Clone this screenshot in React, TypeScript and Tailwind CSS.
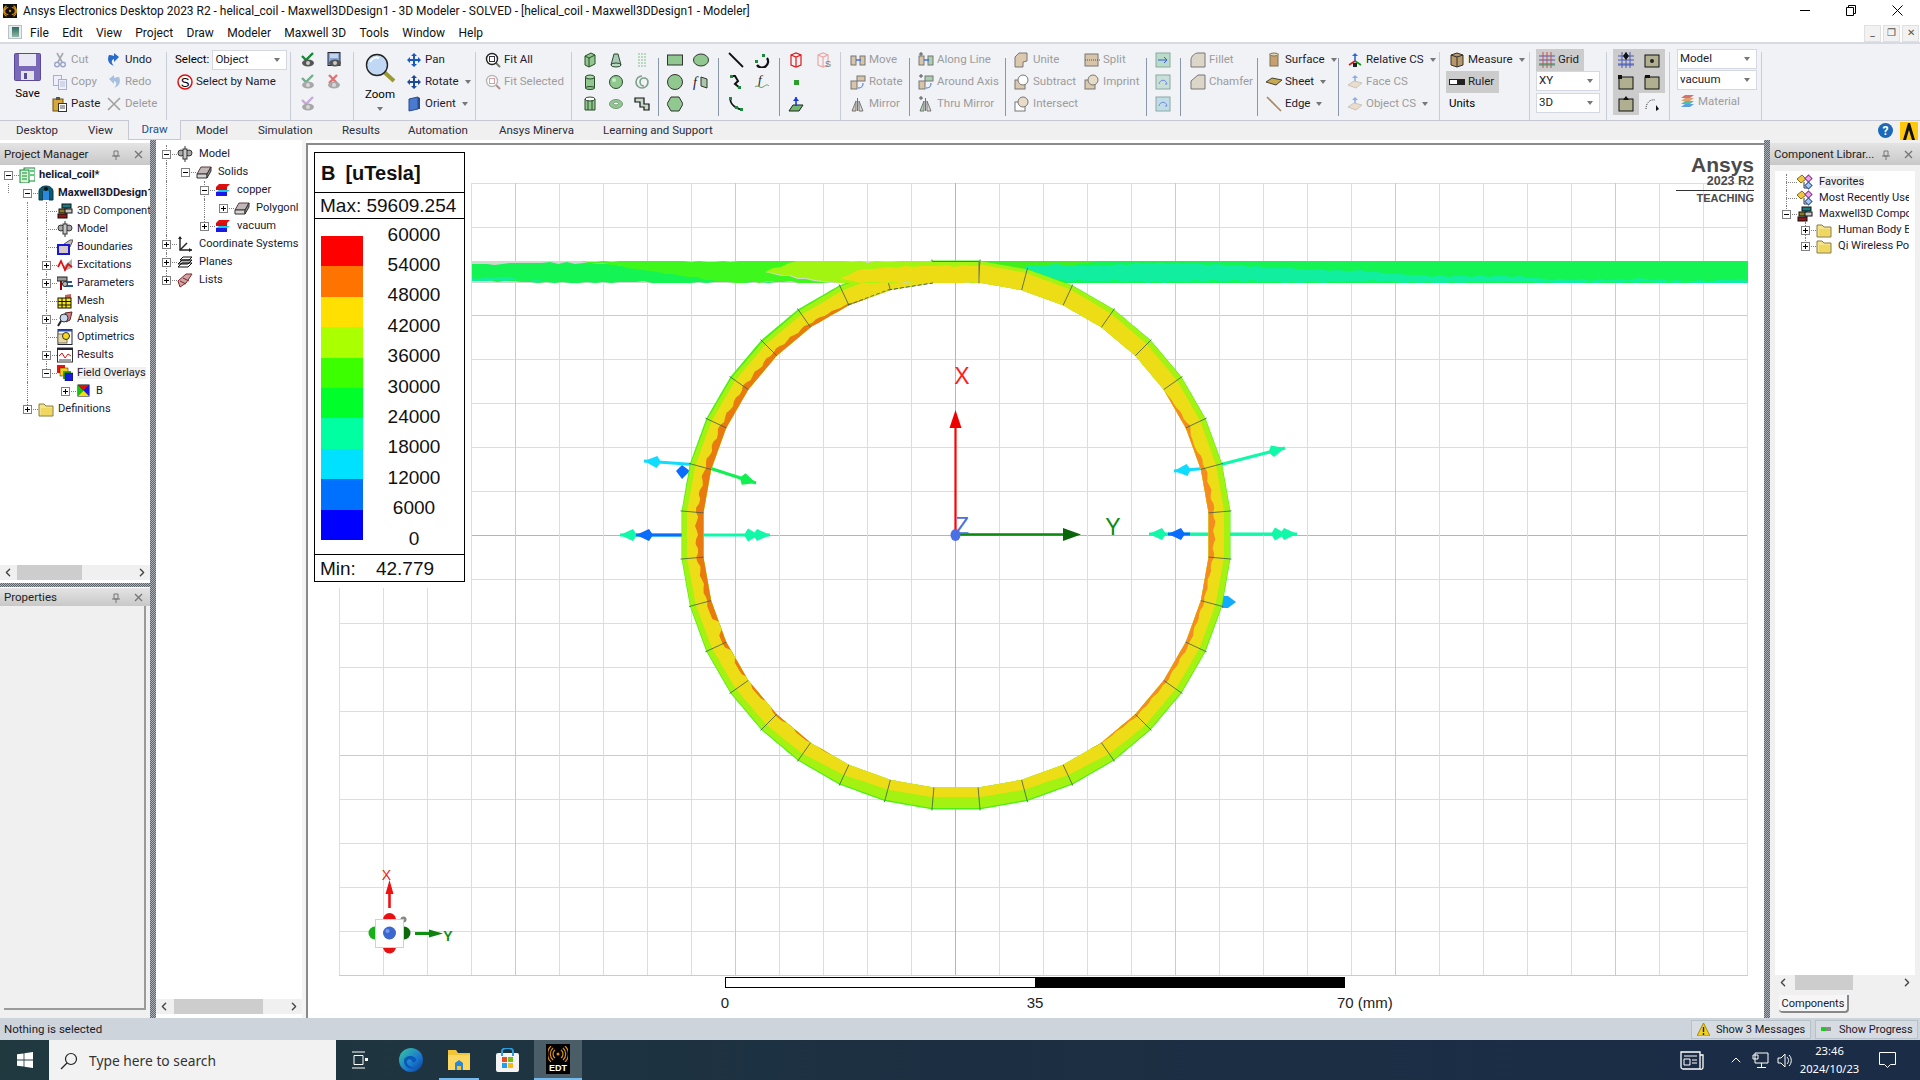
import type { ReactNode } from "react"
import { ChevronLeft, ChevronRight, ChevronUp } from "lucide-react"

// ---------- small helpers ----------

function Svg({ w = 16, h = 16, children }: { w?: number; h?: number; children: ReactNode }) {
  return (
    <svg width={w} height={h} viewBox={`0 0 ${w} ${h}`} className="shrink-0">
      {children}
    </svg>
  )
}

const Caret = () => <span className="ml-[3px] inline-block h-0 w-0 border-x-[3px] border-t-[4px] border-x-transparent border-t-[#777]" />

function Item({ icon, label, off, arrow, className = "" }: { icon?: ReactNode; label?: string; off?: boolean; arrow?: boolean; className?: string }) {
  return (
    <div className={`flex h-[22px] items-center gap-[3px] whitespace-nowrap ${className}`}>
      {icon !== undefined && <span className="flex h-[16px] w-[16px] shrink-0 items-center justify-center">{icon}</span>}
      {label && <span className={off ? "text-[#9c9c9c]" : "text-[#1c1c2c]"}>{label}</span>}
      {arrow && <Caret />}
    </div>
  )
}

function Sep({ dark }: { dark?: boolean }) {
  return dark ? <div className="mt-[9px] h-[58px] w-px shrink-0 bg-[#8a97a8]" /> : <div className="mt-[3px] h-[70px] w-px shrink-0 bg-[#c8ccd6]" />
}

function Combo({ value, className = "" }: { value: string; className?: string }) {
  return (
    <div className={`flex items-center justify-between border border-[#d4d8e0] bg-white pl-[2px] pr-[6px] text-[#1c1c2c] ${className}`}>
      <span>{value}</span>
      <span className="inline-block h-0 w-0 border-x-[3px] border-t-[4px] border-x-transparent border-t-[#777]" />
    </div>
  )
}

// ---------- ribbon icons ----------

const Floppy = () => (
  <svg width="27" height="28" viewBox="0 0 27 28">
    <rect x="0.5" y="0.5" width="26" height="27" rx="1" fill="#7a68b8" stroke="#5a4a98" />
    <rect x="5" y="1" width="17" height="12" fill="#e8e8f4" />
    <rect x="7" y="18" width="13" height="9" fill="#e4e4e4" />
    <rect x="10" y="20" width="3" height="6" fill="#5a4a98" />
  </svg>
)
const Scissors = () => (
  <Svg>
    <path d="M5 1l5 9M11 1L6 10" stroke="#a8a8b0" strokeWidth="1.6" fill="none" />
    <circle cx="5" cy="12.5" r="2.3" fill="none" stroke="#9aa4c8" strokeWidth="1.4" />
    <circle cx="11" cy="12.5" r="2.3" fill="none" stroke="#9aa4c8" strokeWidth="1.4" />
  </Svg>
)
const CopyIco = () => (
  <Svg>
    <rect x="1.5" y="1.5" width="8" height="10" fill="#eef" stroke="#a8b0c8" />
    <rect x="6.5" y="5.5" width="8" height="10" fill="#eef" stroke="#a8b0c8" />
    <path d="M8 8h5M8 10h5M8 12h5" stroke="#b8c0d0" />
  </Svg>
)
const PasteIco = () => (
  <Svg>
    <rect x="1" y="3" width="10" height="12" fill="#d8a838" stroke="#6a5010" />
    <rect x="4" y="1" width="4" height="3" fill="#555" />
    <rect x="6.5" y="7.5" width="8" height="8" fill="#fff" stroke="#333" />
    <path d="M8 10h5M8 12h5" stroke="#555" />
  </Svg>
)
const UndoIco = ({ off }: { off?: boolean }) => (
  <Svg>
    <path d={off ? "M13 3c2 4 1 9-5 11 3-3 3-6 0-7v3L3 5l5-4v3c2-1 4-1 5-1z" : "M3 3c-2 4-1 9 5 11-3-3-3-6 0-7v3l5-5L8 1v3C6 3 4 3 3 3z"} fill={off ? "#a8c0e0" : "#2a6ac8"} />
  </Svg>
)
const XIco = () => (
  <Svg>
    <path d="M2 2l12 12M14 2L2 14" stroke="#a0a0a0" strokeWidth="1.6" />
  </Svg>
)
const SelectName = () => (
  <Svg>
    <circle cx="8" cy="8" r="7" fill="#fff" stroke="#e01010" strokeWidth="1.5" />
    <text x="8" y="12.5" textAnchor="middle" className="font-['Liberation_Sans'] text-[13px]" fill="#000">S</text>
  </Svg>
)
const EyeCheck = ({ c, faded }: { c: string; faded?: boolean }) => (
  <Svg>
    <path d="M2 4l4 4 7-7" stroke={c} strokeWidth="2.4" fill="none" />
    <ellipse cx="8" cy="11" rx="6" ry="3.5" fill={faded ? "#a8a8a8" : "#555"} />
    <circle cx="8" cy="11" r="2" fill={faded ? "#d8d8d8" : "#ccc"} />
  </Svg>
)
const EyeList = () => (
  <Svg>
    <rect x="2" y="0.5" width="12" height="13" fill="#88a8d8" stroke="#223" />
    <path d="M4 3h8M4 5h8" stroke="#fff" />
    <ellipse cx="9" cy="11" rx="6" ry="3.5" fill="#555" />
    <circle cx="9" cy="11" r="2" fill="#ccc" />
  </Svg>
)
const EyeX = () => (
  <Svg>
    <path d="M3 1l8 8M11 1L3 9" stroke="#e07070" strokeWidth="2.2" />
    <ellipse cx="8" cy="11" rx="6" ry="3.5" fill="#a8a8a8" />
    <circle cx="8" cy="11" r="2" fill="#d8d8d8" />
  </Svg>
)
const Magnifier = () => (
  <svg width="31" height="30" viewBox="0 0 31 30">
    <path d="M18 18l11 10" stroke="#9a9a30" strokeWidth="4" />
    <circle cx="12" cy="12" r="10.5" fill="#c0d8f4" stroke="#222" strokeWidth="1.4" />
    <path d="M5 9c2-4 6-5 9-4" stroke="#fff" strokeWidth="2" fill="none" />
  </svg>
)
const Fourway = ({ rot }: { rot?: boolean }) => (
  <Svg>
    <path d="M8 1l3 3H9v3h3V5l3 3-3 3V9H9v3h2l-3 3-3-3h2V9H4v2L1 8l3-3v2h3V4H5z" fill={rot ? "#1a4a98" : "#1a5ac0"} />
  </Svg>
)
const OrientCube = () => (
  <Svg>
    <path d="M3 3l9-2v12l-9 2z" fill="#4a7ad0" stroke="#2a4a90" />
    <path d="M12 1l2 1v11l-2 0z" fill="#2a4a90" />
  </Svg>
)
const FitIco = ({ off }: { off?: boolean }) => (
  <Svg>
    <path d="M10 10l5 5" stroke={off ? "#b09090" : "#776"} strokeWidth="2" />
    <circle cx="7" cy="7" r="5.5" fill="#fff" stroke={off ? "#b8b8b8" : "#222"} strokeWidth="1.4" />
    <rect x="4.5" y="4.5" width="5" height="5" fill="none" stroke={off ? "#d8a0a0" : "#334"} />
  </Svg>
)

const G = "#90c890"
const GD = "#2a4a2a"
const Cyl = () => (
  <Svg>
    <rect x="3.5" y="3" width="9" height="11" fill={G} stroke={GD} />
    <ellipse cx="8" cy="3" rx="4.5" ry="2" fill="#a8dca8" stroke={GD} />
    <ellipse cx="8" cy="14" rx="4.5" ry="1.5" fill={G} stroke={GD} />
  </Svg>
)
const BoxG = () => (
  <Svg>
    <path d="M3 4l6-3 4 2v9l-6 3-4-2z" fill={G} stroke={GD} />
    <path d="M3 4l4 2 6-3M7 6v9" stroke={GD} fill="none" />
  </Svg>
)
const Cone = () => (
  <Svg>
    <path d="M6 2h4l3 11H3z" fill="#a8c8b8" stroke={GD} />
    <ellipse cx="8" cy="13" rx="5" ry="2" fill="#b8d8c8" stroke={GD} />
  </Svg>
)
const Sphere = () => (
  <Svg>
    <circle cx="8" cy="8" r="6.5" fill={G} stroke={GD} />
    <circle cx="6" cy="6" r="2" fill="#c8ecc8" />
  </Svg>
)
const Prism = () => (
  <Svg>
    <path d="M3 3h10v11H3z" fill={G} stroke={GD} />
    <ellipse cx="8" cy="3" rx="5" ry="2" fill="#fff" stroke={GD} />
    <path d="M6 4v10M10 4v10" stroke={GD} />
  </Svg>
)
const Torus = () => (
  <Svg>
    <ellipse cx="8" cy="8" rx="6.5" ry="4.5" fill={G} stroke="#7a9a7a" />
    <ellipse cx="8" cy="7.5" rx="2.5" ry="1.5" fill="#fff" stroke="#7a9a7a" />
  </Svg>
)
const Helix = () => (
  <Svg>
    <path d="M4 2h8M4 5h8M4 8h8M4 11h8M4 14h8" stroke="#a8d0b0" strokeWidth="1.6" strokeDasharray="2 1" />
  </Svg>
)
const Spiral = () => (
  <Svg>
    <path d="M8 2a6 6 0 1 0 6 6 4 4 0 1 0-4 4" fill="none" stroke="#7aa088" strokeWidth="1.6" />
  </Svg>
)
const Bond = () => (
  <Svg>
    <path d="M1 2h9v6h5v6h-5v-3H6V6H1z" fill="#c8d8c8" stroke="#111" strokeWidth="1.2" />
  </Svg>
)
const RectG = () => (
  <Svg>
    <rect x="0.5" y="3" width="15" height="10" fill={G} stroke="#333" />
  </Svg>
)
const OvalG = () => (
  <Svg>
    <ellipse cx="8" cy="8" rx="7.5" ry="6" fill={G} stroke="#333" />
  </Svg>
)
const CircleG = () => (
  <Svg>
    <circle cx="8" cy="8" r="7.5" fill={G} stroke="#333" />
  </Svg>
)
const FnIco = () => (
  <Svg>
    <text x="0" y="13" className="font-['Liberation_Serif'] text-[14px] italic" fill="#222">f</text>
    <path d="M8 3l6 2v9l-6-2z" fill="#a8c8a8" stroke="#333" />
  </Svg>
)
const Hexa = () => (
  <Svg>
    <path d="M4 1h8l4 7-4 7H4L0 8z" fill={G} stroke="#333" />
  </Svg>
)
const LineIco = () => (
  <Svg>
    <path d="M1 1l14 14" stroke="#111" strokeWidth="1.8" />
  </Svg>
)
const ArcIco = () => (
  <Svg>
    <path d="M13 6a6 6 0 0 1-10 7" stroke="#111" strokeWidth="2.2" fill="none" />
    <rect x="1" y="8" width="3" height="3" fill="#1a8a3a" />
    <rect x="8" y="2" width="3" height="3" fill="#1a8a3a" />
  </Svg>
)
const ZigIco = () => (
  <Svg>
    <path d="M3 2h4l3 5-3 3 5 4" stroke="#111" strokeWidth="2" fill="none" />
    <rect x="2" y="1" width="3" height="3" fill="#1a8a3a" />
    <rect x="10" y="12" width="3" height="3" fill="#1a8a3a" />
  </Svg>
)
const FnWave = () => (
  <Svg>
    <text x="4" y="10" className="font-['Liberation_Serif'] text-[13px] italic" fill="#222">f</text>
    <path d="M1 13c3-3 5 2 8 0s4-3 6-1" stroke="#6a9a6a" fill="none" />
  </Svg>
)
const CurveIco = () => (
  <Svg>
    <path d="M2 1c0 8 5 11 12 13" stroke="#111" strokeWidth="1.8" fill="none" />
    <rect x="1" y="1" width="3" height="3" fill="#1a8a3a" />
    <rect x="7" y="10" width="3" height="3" fill="#1a8a3a" />
    <rect x="12" y="12" width="3" height="3" fill="#1a8a3a" />
  </Svg>
)
const RedBox = ({ s }: { s?: boolean }) => (
  <Svg>
    <g stroke={s ? "#e8a8a8" : "#e01818"} fill="none" strokeWidth="1.2">
      <path d="M3 3l5-2 5 2v10l-5 2-5-2z" />
      <path d="M3 3l5 2 5-2M8 5v10" />
    </g>
    {s && <text x="10" y="15" className="font-['Liberation_Sans'] text-[9px]" fill="#777">S</text>}
  </Svg>
)
const Dot = () => <div className="h-[5px] w-[5px] bg-[#2aa02a]" />
const PlaneIco = () => (
  <Svg>
    <path d="M1 15l4-6h10l-4 6z" fill="#70b870" stroke="#222" />
    <path d="M8 1v9" stroke="#1a3ae0" strokeWidth="1.6" />
    <path d="M5 5l3-4 3 4z" fill="#1a3ae0" />
  </Svg>
)
const MoveIco = ({ kind }: { kind: "m" | "r" | "f" | "lm" | "lr" | "lf" }) => {
  const plus = kind[0] === "l"
  const k = kind[kind.length - 1]
  const c = plus ? "#a8d0b0" : "#d8c4a8"
  return (
    <Svg>
      {plus && <path d="M1 2h4M3 0v4" stroke="#555" />}
      {k === "f" ? (
        <>
          <path d="M2 15l4-10v10z" fill={c} stroke="#777" />
          <path d="M9 15V5l4 10z" fill="#d8d8d0" stroke="#777" />
          <path d="M7.5 2v13" stroke="#5a6ad8" />
        </>
      ) : k === "r" ? (
        <>
          <rect x="1" y="7" width="6" height="8" fill="#d8c4a8" stroke="#777" />
          <rect x="7" y="2" width="8" height="5" fill={c} stroke="#777" />
          <path d="M8 14c4 0 5-2 5-5" stroke="#3a6ae0" fill="none" />
        </>
      ) : (
        <>
          <rect x="1" y="4" width="5" height="9" fill="#d8c4a8" stroke="#777" />
          <rect x="10" y="4" width="5" height="9" fill={c} stroke="#777" />
          <path d="M6 8h5" stroke="#3a6ae0" strokeWidth="1.4" />
        </>
      )}
    </Svg>
  )
}
const BoolIco = ({ kind }: { kind: "u" | "s" | "i" | "sp" | "im" }) => (
  <Svg>
    {kind === "sp" ? (
      <>
        <rect x="1" y="2" width="13" height="12" fill="#d8c4a8" stroke="#777" />
        <path d="M1 8h15" stroke="#555" strokeDasharray="1 1" />
      </>
    ) : kind === "u" ? (
      <path d="M1 5l4-4h8v8l-4 1v5H1z" fill="#dcc8ac" stroke="#777" />
    ) : (
      <>
        <rect x="1" y="6" width="10" height="9" fill={kind === "i" ? "#fff" : "#dcc8ac"} stroke="#777" />
        <circle cx="9" cy="6" r="5" fill={kind === "s" ? "#fff" : "#e8dcc8"} stroke="#777" />
      </>
    )}
  </Svg>
)
const SheetIco = ({ kind }: { kind: number }) => (
  <Svg>
    <rect x="1" y="1" width="14" height="14" fill={kind === 0 ? "#b8dcc8" : kind === 1 ? "#c8e0d8" : "#c0dce8"} stroke="#8aa8a0" />
    <path d={kind === 0 ? "M3 8h9M9 5l3 3-3 3" : "M4 10c1-5 7-5 8 0M10 10l2 0"} stroke={kind === 0 ? "#3a5ae0" : "#6a8ae0"} fill="none" />
  </Svg>
)
const FilletIco = ({ c }: { c?: boolean }) => (
  <Svg>
    <path d={c ? "M1 15V7l7-6h7v14z" : "M1 15V8c0-4 4-7 7-7h7v14z"} fill="#dcd6c8" stroke="#777" />
  </Svg>
)
const SurfIco = () => (
  <Svg>
    <rect x="4" y="2" width="8" height="12" fill="#c8a070" stroke="#775" />
    <ellipse cx="8" cy="2.5" rx="4" ry="1.5" fill="#e8d8c0" stroke="#775" />
  </Svg>
)
const SheetSm = () => (
  <Svg>
    <path d="M0 8l6-4 10 2-6 5z" fill="#c8a850" stroke="#443" />
  </Svg>
)
const EdgeIco = () => (
  <Svg>
    <path d="M1 1l14 14" stroke="#a88a60" strokeWidth="1.6" />
  </Svg>
)
const CsIco = ({ off, kind }: { off?: boolean; kind: number }) => (
  <Svg>
    <g opacity={off ? 0.5 : 1}>
      <path d="M8 9V2" stroke="#2a6ad8" strokeWidth="1.6" />
      <path d="M5 4l3-3 3 3z" fill="#2a6ad8" />
      {kind === 0 ? (
        <>
          <path d="M8 9l-6 4" stroke="#d01818" strokeWidth="1.6" />
          <path d="M8 9l6 4" stroke="#109010" strokeWidth="1.6" />
          <rect x="6" y="11" width="4" height="4" fill="#222" />
        </>
      ) : (
        <path d="M1 11l6-4 8 2-6 5z" fill="#e8c8a0" stroke="#998" />
      )}
    </g>
  </Svg>
)
const MeasureIco = () => (
  <Svg>
    <path d="M2 3l6-2 6 2v10l-6 2-6-2z" fill="#b89868" stroke="#333" />
    <path d="M8 5v10M2 3l6 2 6-2" stroke="#333" fill="none" />
  </Svg>
)
const RulerIco = () => (
  <div className="h-[6px] w-[16px] border border-[#222] bg-linear-to-r from-white from-50% to-[#222] to-50%" />
)
const GridIco = ({ dotted }: { dotted?: boolean }) => (
  <Svg>
    <path d="M0 4h16M0 8h16M0 12h16" stroke="#4858b8" />
    <path d="M4 0v16M8 0v16M12 0v16" stroke={dotted ? "#4858b8" : "#c05050"} />
    <path d="M0 13h16" stroke={dotted ? "#4858b8" : "#40a040"} />
    {dotted && <path d="M8 0l3 4-3 4-3-4z" fill="#111" />}
  </Svg>
)
const SnapBox = ({ kind }: { kind: number }) => (
  <Svg>
    <rect x="1" y="3" width="14" height="12" fill="#b0b090" stroke="#111" />
    {kind === 0 && <circle cx="8" cy="9" r="2" fill="#222" />}
    {kind === 1 && <rect x="0" y="1" width="4" height="4" fill="#111" />}
    {kind === 2 && <path d="M1 1h5v3H1z" fill="#111" />}
    {kind === 3 && <path d="M8 0l3 4H5z" fill="#111" />}
  </Svg>
)
const ArcSnap = () => (
  <Svg>
    <path d="M2 13c0-6 4-10 9-9" stroke="#333" strokeDasharray="1 1" fill="none" />
    <path d="M12 9l3 4-3 2z" fill="#111" />
  </Svg>
)
const MaterialIco = () => (
  <Svg>
    <path d="M2 13l4-3h9l-4 3z" fill="#5aa0e0" />
    <path d="M2 10l4-3h9l-4 3z" fill="#50c0a0" />
    <path d="M2 7l4-3h9l-4 3z" fill="#e0a070" />
    <path d="M2 4l4-3h9l-4 3z" fill="#d87070" />
  </Svg>
)

// ---------- tree icons ----------

const ProjectIco = () => (
  <Svg>
    <rect x="5" y="1" width="11" height="13" fill="#fff" stroke="#108a30" />
    <rect x="1" y="3" width="9" height="13" fill="#d8f4d8" stroke="#108a30" />
    <path d="M3 6h5M3 9h5M3 12h5" stroke="#108a30" />
    <path d="M12 3v2M14 3v2M12 7v2M14 7v2" stroke="#18c048" strokeWidth="1.4" />
  </Svg>
)
const MaxwellIco = () => (
  <Svg>
    <path d="M1 15V6a7 5 0 0 1 14 0v9h-4V7a3 2 0 0 0-6 0v8z" fill="#0a5a70" stroke="#08384a" />
    <path d="M5 15V7a3 2 0 0 1 6 0v8z" fill="#2a88e0" />
    <circle cx="8" cy="4" r="2" fill="#111" />
  </Svg>
)
const StackIco = () => (
  <Svg>
    <rect x="5" y="1" width="9" height="4" fill="#1a7a80" stroke="#111" />
    <rect x="2" y="6" width="8" height="4" fill="#8a7a20" stroke="#111" />
    <rect x="8" y="6" width="7" height="4" fill="#c8c8c8" stroke="#111" />
    <rect x="1" y="11" width="9" height="4" fill="#901818" stroke="#111" />
  </Svg>
)
const ModelIco = () => (
  <Svg>
    <circle cx="4" cy="7" r="3" fill="#a8a8a8" stroke="#333" />
    <circle cx="12" cy="7" r="3" fill="#a8a8a8" stroke="#333" />
    <rect x="6" y="3" width="4" height="10" fill="#c8c8c8" stroke="#333" />
    <path d="M8 0v3M8 13v3" stroke="#333" />
  </Svg>
)
const BoundIco = () => (
  <Svg>
    <path d="M7 5l6-4h3l-3 7H7z" fill="#c8b8b8" stroke="#555" />
    <rect x="1" y="6" width="11" height="9" fill="#d8c8c8" stroke="#1818d8" strokeWidth="2" />
  </Svg>
)
const ExciteIco = () => (
  <Svg>
    <path d="M7 9l8-7v9l-8 3z" fill="#b0b0b0" />
    <path d="M1 10l3-6 4 9 3-6 4 3" stroke="#e01010" strokeWidth="1.8" fill="none" />
  </Svg>
)
const ParamIco = () => (
  <Svg>
    <rect x="0" y="2" width="10" height="4" fill="#9a9a9a" stroke="#222" />
    <path d="M4 6v9" stroke="#900" strokeWidth="2" />
    <path d="M8 7h7M9 11h7" stroke="#205a8a" strokeWidth="2" />
    <circle cx="8" cy="9" r="2.5" fill="#bbb" stroke="#222" />
  </Svg>
)
const MeshIco = () => (
  <Svg>
    <path d="M8 2l6-1v4H8z" fill="#c86060" />
    <rect x="1" y="5" width="13" height="10" fill="#f8e818" stroke="#111" />
    <path d="M1 8.5h13M1 12h13M5 5v10M9 5v10" stroke="#111" />
  </Svg>
)
const AnalysisIco = () => (
  <Svg>
    <path d="M8 2l7-1-2 8-4 2z" fill="#c88080" stroke="#622" />
    <circle cx="7" cy="7" r="4" fill="#c8d8f0" stroke="#333" />
    <path d="M4 10l-3 5" stroke="#222" strokeWidth="2" />
  </Svg>
)
const OptIco = () => (
  <Svg>
    <rect x="1" y="0.5" width="14" height="15" fill="#fff" stroke="#223" />
    <rect x="1" y="0.5" width="14" height="2" fill="#2a4aa8" />
    <rect x="1" y="5" width="9" height="9" fill="#e8d8a0" stroke="#776" />
    <circle cx="9" cy="7" r="3.5" fill="#f8d818" stroke="#333" />
  </Svg>
)
const ResultIco = () => (
  <Svg>
    <rect x="0.5" y="1" width="15" height="14" fill="#fff" stroke="#333" />
    <rect x="0.5" y="1" width="15" height="2" fill="#223" />
    <path d="M2 9l3-3 3 5 3-4 3 2" stroke="#e01010" fill="none" />
    <path d="M2 13h12" stroke="#444" />
  </Svg>
)
const OverlayIco = () => (
  <Svg>
    <rect x="0" y="0" width="8" height="8" fill="#f01010" />
    <rect x="3" y="3" width="8" height="8" fill="#f8d010" stroke="#222" strokeWidth="0.5" />
    <rect x="6" y="6" width="8" height="8" fill="#18b018" />
    <rect x="8" y="8" width="8" height="8" fill="#1818e0" stroke="#111" strokeWidth="0.5" />
  </Svg>
)
const BFlag = () => (
  <Svg>
    <rect x="1.5" y="1.5" width="12" height="12" fill="#111" />
    <path d="M2 2l5.500 5.500L2 13z" fill="#18c018" />
    <path d="M13 2L7.500 7.500 13 13z" fill="#1818e8" />
    <path d="M2 2h11L7.500 7.500z" fill="#e01010" />
    <path d="M2 13h11L7.500 7.500z" fill="#f0e010" />
  </Svg>
)
const FolderIco = () => (
  <Svg>
    <path d="M1 3h5l2 2h7v10H1z" fill="#f4e48c" stroke="#8a7a3a" />
    <path d="M3 7h11v7H3z" fill="#f0d860" />
  </Svg>
)
const SolidIco = () => (
  <Svg>
    <path d="M1 10l4-7h10l-4 7z" fill="#c0b8b8" stroke="#5a3a3a" />
    <path d="M1 10h10v4H1z" fill="#d8d4d4" stroke="#333" />
    <path d="M11 10l4-7v4l-4 7z" fill="#8a8a8a" stroke="#333" />
  </Svg>
)
const MatIco = () => (
  <Svg>
    <path d="M1 5l3-3h11l-3 3z" fill="#e01010" />
    <rect x="1" y="5" width="11" height="3" fill="#d01010" />
    <path d="M1 10l3-2h11l-3 2z" fill="#18c8e8" />
    <rect x="1" y="10" width="11" height="4" fill="#1818e8" />
  </Svg>
)
const CsTree = () => (
  <Svg>
    <path d="M3 1v13h12" stroke="#222" strokeWidth="1.4" fill="none" />
    <path d="M3 14l7-7" stroke="#222" strokeWidth="1.4" />
    <path d="M1 3l2-3 2 3zM12 12l3 2-3 2z" fill="#222" />
  </Svg>
)
const PlanesIco = () => (
  <Svg>
    <path d="M1 10l4-4h10l-4 4z" fill="#b8b8b8" stroke="#111" />
    <path d="M1 13l4-4h10l-4 4zM3 6l3-3h9l-3 3z" fill="none" stroke="#111" />
  </Svg>
)
const ListsIco = () => (
  <Svg>
    <path d="M1 9l8-7h6l-6 9-6 4z" fill="#c8a8a8" stroke="#822" />
    <path d="M3 9l6 3M6 6l6 3" stroke="#822" />
  </Svg>
)
const FavIco = () => (
  <Svg>
    <path d="M0 5l5-4 4 4-5 4z" fill="#f0c840" stroke="#8a6a10" />
    <rect x="9" y="2" width="5" height="5" transform="rotate(45 11.5 4.5)" fill="#e8a8e8" stroke="#8a3a8a" />
    <rect x="9" y="9" width="5" height="5" transform="rotate(45 11.5 11.5)" fill="#a8c8f0" stroke="#2a5a9a" />
    <path d="M7 8v6h3" stroke="#334" fill="none" />
  </Svg>
)

// ---------- tree ----------

type Row = { level: number; label: string; icon: ReactNode; exp?: "+" | "-"; bold?: boolean; sel?: boolean; guides?: number[]; half?: number[] }

function TreeRow({ row, base, compact, wide }: { row: Row; base: number; compact?: boolean; wide?: boolean }) {
  return (
    <div className={`relative flex items-center whitespace-nowrap text-[11.1px] ${compact ? "h-[16px]" : "h-[18px]"}`} style={{ paddingLeft: base + 19 * row.level }}>
      {row.guides?.map((x) => (
        <span key={x} className="absolute inset-y-0 border-l border-dotted border-[#808080]" style={{ left: x }} />
      ))}
      {row.half?.map((x) => (
        <span key={x} className="absolute top-0 h-[9px] border-l border-dotted border-[#808080]" style={{ left: x }} />
      ))}
      <span className="relative h-full w-[15px] shrink-0">
        <span className={`absolute left-[4px] right-0 border-t border-dotted border-[#808080] ${compact ? "top-[8px]" : "top-[9px]"}`} />
        {row.exp && (
          <span className={`absolute left-0 h-[9px] w-[9px] border border-[#808080] bg-white ${compact ? "top-[4px]" : "top-[5px]"}`}>
            <span className="absolute left-[1px] top-[3px] h-px w-[5px] bg-black" />
            {row.exp === "+" && <span className="absolute left-[3px] top-[1px] h-[5px] w-px bg-black" />}
          </span>
        )}
      </span>
      <span className="relative flex w-[16px] shrink-0 justify-center">{row.icon}</span>
      <span className={`relative ${wide ? "ml-[6px]" : "ml-[4px]"} ${row.bold ? "font-bold" : ""} ${row.sel ? "bg-[#f0f0f0]" : ""} text-[#1a1a30]`}>{row.label}</span>
    </div>
  )
}

const L1 = 27
const L2 = 46
const projectRows: Row[] = [
  { level: 0, label: "helical_coil*", icon: <ProjectIco />, exp: "-", bold: true },
  { level: 1, label: "Maxwell3DDesign1", icon: <MaxwellIco />, exp: "-", bold: true, half: [8] },
  { level: 2, label: "3D Components", icon: <StackIco />, guides: [L1, L2] },
  { level: 2, label: "Model", icon: <ModelIco />, guides: [L1, L2] },
  { level: 2, label: "Boundaries", icon: <BoundIco />, guides: [L1, L2] },
  { level: 2, label: "Excitations", icon: <ExciteIco />, exp: "+", guides: [L1, L2] },
  { level: 2, label: "Parameters", icon: <ParamIco />, exp: "+", guides: [L1, L2] },
  { level: 2, label: "Mesh", icon: <MeshIco />, guides: [L1, L2] },
  { level: 2, label: "Analysis", icon: <AnalysisIco />, exp: "+", guides: [L1, L2] },
  { level: 2, label: "Optimetrics", icon: <OptIco />, guides: [L1, L2] },
  { level: 2, label: "Results", icon: <ResultIco />, exp: "+", guides: [L1, L2] },
  { level: 2, label: "Field Overlays", icon: <OverlayIco />, exp: "-", sel: true, guides: [L1], half: [L2] },
  { level: 3, label: "B", icon: <BFlag />, exp: "+", guides: [L1] },
  { level: 1, label: "Definitions", icon: <FolderIco />, exp: "+", half: [L1] },
]
const modelRows: Row[] = [
  { level: 0, label: "Model", icon: <ModelIco />, exp: "-", guides: [10] },
  { level: 1, label: "Solids", icon: <SolidIco />, exp: "-", guides: [10] },
  { level: 2, label: "copper", icon: <MatIco />, exp: "-", guides: [10, 48] },
  { level: 3, label: "Polygonl", icon: <SolidIco />, exp: "+", guides: [10, 48] },
  { level: 2, label: "vacuum", icon: <MatIco />, exp: "+", guides: [10], half: [48] },
  { level: 0, label: "Coordinate Systems", icon: <CsTree />, exp: "+", guides: [10] },
  { level: 0, label: "Planes", icon: <PlanesIco />, exp: "+", guides: [10] },
  { level: 0, label: "Lists", icon: <ListsIco />, exp: "+", half: [10] },
]
const compRows: Row[] = [
  { level: 0, label: "Favorites", icon: <FavIco />, sel: true, guides: [16] },
  { level: 0, label: "Most Recently Used", icon: <FavIco />, guides: [16] },
  { level: 0, label: "Maxwell3D Components", icon: <StackIco />, exp: "-", half: [16] },
  { level: 1, label: "Human Body Example", icon: <FolderIco />, exp: "+", guides: [35] },
  { level: 1, label: "Qi Wireless Power", icon: <FolderIco />, exp: "+", half: [35] },
]

function HScroll({ spacer, thumb, arrowX = "" }: { spacer: string; thumb: string; arrowX?: string }) {
  return (
    <div className={`flex h-[15px] items-center bg-[#f0f0f0] ${arrowX}`}>
      <ChevronLeft size={13} strokeWidth={2.5} className="w-[16px] shrink-0 text-[#444]" />
      <div className={spacer} />
      <div className={`h-full bg-[#cdcdcd] ${thumb}`} />
      <div className="flex-1" />
      <ChevronRight size={13} strokeWidth={2.5} className="w-[16px] shrink-0 text-[#444]" />
    </div>
  )
}

function PaneHeader({ title, small }: { title: string; small?: boolean }) {
  return (
    <div className={`flex items-center bg-linear-to-b from-[#e4e4e4] to-[#c8c8c8] pl-[4px] pr-[7px] pt-px text-[#222] ${small ? "h-[18px]" : "h-[22px]"}`}>
      <span className="flex-1 whitespace-nowrap">{title}</span>
      <svg width="10" height="10" viewBox="0 0 10 10" className="mr-[13px] shrink-0">
        <path d="M3 1h4v5H3zM1 6h8M5 6v4" stroke="#777" fill="none" />
      </svg>
      <svg width="9" height="9" viewBox="0 0 9 9" className="shrink-0">
        <path d="M1 1l7 7M8 1L1 8" stroke="#777" strokeWidth="1.4" />
      </svg>
    </div>
  )
}

const Splitter = () => <div className="w-[6px] shrink-0 bg-[repeating-conic-gradient(#5f666e_0_25%,#aab0b6_0_50%)] bg-[length:2px_2px]" />

// ---------- 3D view geometry ----------

const CX = 956
const CY = 535
const R_IN = 253.5
const R_OUT = 275.5

const rad = (d: number) => (d * Math.PI) / 180
// the coil is a 36-sided polygon: a flat centred on every 10 degrees
const flat = (a: number) => {
  const d = ((a % 10) + 15) % 10 - 5
  return Math.cos(rad(5)) / Math.cos(rad(d))
}
const pt = (r: number, a: number) => `${(CX + r * flat(a) * Math.cos(rad(a))).toFixed(1)},${(CY + r * flat(a) * Math.sin(rad(a))).toFixed(1)}`

function keyed(keys: number[][], a: number) {
  for (let i = 1; i < keys.length; i++) {
    if (a <= keys[i][0]) {
      const [a0, v0] = keys[i - 1]
      const [a1, v1] = keys[i]
      return v0 + ((v1 - v0) * (a - a0)) / (a1 - a0)
    }
  }
  return keys[keys.length - 1][1]
}

function band(a0: number, a1: number, rIn: (a: number) => number, rOut: (a: number) => number) {
  const out: string[] = []
  const back: string[] = []
  for (let a = a0; a <= a1; a += 1) {
    out.push(pt(rOut(a), a))
    back.unshift(pt(rIn(a), a))
  }
  return [...out, ...back].join(" ")
}

// roughens a polygon edge so contour regions look like the solver's stepped plot;
// y stays inside the strip (261..283)
function jag(points: string, step = 8, amp = 1.6) {
  const p = points.split(" ").map((s) => s.split(",").map(Number))
  const out: string[] = []
  p.forEach(([x0, y0], i) => {
    const [x1, y1] = p[(i + 1) % p.length]
    const n = Math.max(1, Math.round(Math.abs(x1 - x0) / step))
    for (let k = 0; k < n; k++) {
      const x = x0 + ((x1 - x0) * k) / n
      const y = y0 + ((y1 - y0) * k) / n
      const off = k === 0 ? 0 : amp * Math.sin(x * 0.53) * Math.cos(x * 0.21 + i)
      out.push(`${x.toFixed(1)},${Math.min(283, Math.max(261, Math.round(y + off)))}`)
    }
  })
  return out.join(" ")
}

const ygKeys = [[0, 275], [90, 274], [180, 275], [225, 273.5], [270, 275], [360, 275]]
const yellowKeys = [[0, 269], [50, 268], [70, 264], [90, 263], [110, 264], [130, 268], [180, 270], [240, 269], [270, 272], [310, 270], [360, 269]]
const orangeLeft = [[118, 0], [128, 1.5], [140, 2], [150, 3], [160, 5], [172, 7], [180, 8.5], [200, 8], [215, 7], [230, 6], [240, 4], [246, 1.5], [250, 0]]
const orangeRight = [[-35, 0], [-30, 3], [-25, 5], [-21, 2], [-18, 5], [-10, 7], [0, 7], [8, 5], [16, 4], [25, 5], [35, 4], [45, 3], [52, 1.5], [58, 0]]
const wobble = (a: number) => {
  // the orange is broken into patches on the lower left, solid elsewhere
  if (a > 110 && a < 165) return Math.sin(a * 0.9) > -0.1 ? 1 : 0.05
  return 0.82 + 0.18 * Math.sin(a * 1.7)
}

function Head({ x1, y1, x2, y2, len, hw, c }: { x1: number; y1: number; x2: number; y2: number; len: number; hw: number; c: string }) {
  const t = Math.atan2(y2 - y1, x2 - x1)
  const cs = Math.cos(t)
  const sn = Math.sin(t)
  const bx = x2 - len * cs
  const by = y2 - len * sn
  const p = `${x2},${y2} ${bx + hw * sn},${by - hw * cs} ${bx - 4 * cs},${by - 4 * sn} ${bx - hw * sn},${by + hw * cs}`
  return <polygon points={p} fill={c} />
}

function FieldArrow({ x1, y1, x2, y2, c, dbl }: { x1: number; y1: number; x2: number; y2: number; c: string; dbl?: boolean }) {
  const t = Math.atan2(y2 - y1, x2 - x1)
  return (
    <g>
      <line x1={x1} y1={y1} x2={x2} y2={y2} stroke={c} strokeWidth="3" />
      <Head x1={x1} y1={y1} x2={x2} y2={y2} len={13} hw={6} c={c} />
      {dbl && <Head x1={x1} y1={y1} x2={x2 - 11 * Math.cos(t)} y2={y2 - 11 * Math.sin(t)} len={11} hw={6.5} c={c} />}
    </g>
  )
}

function Grid() {
  const xs = Array.from({ length: 33 }, (_, k) => k)
  const ys = Array.from({ length: 19 }, (_, k) => k)
  return (
    <g shapeRendering="crispEdges">
      {ys.map((k) => (
        <line key={k} x1={339} x2={1748} y1={183.5 + 44 * k} y2={183.5 + 44 * k} stroke={k === 8 ? "#dba5a5" : k % 5 === 3 ? "#c8c8de" : "#dcdce8"} />
      ))}
      {xs.map((k) => (
        <line key={k} y1={183} y2={975} x1={339.5 + 44 * k} x2={339.5 + 44 * k} stroke={k === 14 ? "#9cc89c" : k % 5 === 4 ? "#c8c8de" : "#dcdce8"} />
      ))}
    </g>
  )
}

function Coil() {
  const ticks = Array.from({ length: 36 }, (_, k) => 5 + k * 10)
  return (
    <g>
      <polygon points={band(0, 360, () => R_IN, () => R_OUT)} fill="#4af018" />
      <polygon points={band(0, 360, () => R_IN, (a) => keyed(ygKeys, a))} fill="#a4f212" />
      <polygon points={band(0, 360, () => R_IN, (a) => keyed(yellowKeys, a))} fill="#eddd16" />
      <polygon points={band(118, 250, () => R_IN, (a) => R_IN + keyed(orangeLeft, a) * wobble(a))} fill="#e87a10" />
      <polygon points={band(-35, 58, () => R_IN, (a) => R_IN + keyed(orangeRight, a) * wobble(a))} fill="#f68c20" />
      {ticks.map((a) => (
        <line
          key={a}
          x1={CX + R_IN * Math.cos(rad(a))}
          y1={CY + R_IN * Math.sin(rad(a))}
          x2={CX + (R_OUT + 1) * Math.cos(rad(a))}
          y2={CY + (R_OUT + 1) * Math.sin(rad(a))}
          stroke="#3c5a50"
          strokeWidth="0.8"
        />
      ))}
    </g>
  )
}

function CoilBarLeft() {
  return (
    <g>
      <rect x="472" y="261" width="507" height="22" fill="#d4d6d0" />
      <polygon points={jag("472,264 525,263 600,264 650,268 720,275 776,282 660,283 530,282 472,281")} fill="#14f452" />
      <polygon points={jag("472,278 500,277 520,280 545,281 472,281")} fill="#14eca0" />
      <polygon points={jag("580,261 810,261 765,272 830,283 720,282 650,271")} fill="#3ef71c" />
      <polygon points={jag("797,261 979,261 979,283 840,283 765,272")} fill="#a2f510" />
      <polygon points={jag("840,278 858,270 880,268 979,266 979,283 860,283")} fill="#eddc14" />
      <polyline points="888,290 933,283" stroke="#3c5a50" fill="none" strokeDasharray="4 2" />
      <polyline points="848,305 888,290" stroke="#3c5a50" fill="none" strokeDasharray="4 2" strokeWidth="0.8" />
      <path d="M932 261.5h47v22" stroke="#5f7a6a" fill="none" />
    </g>
  )
}

function Viewport() {
  return (
    <svg width="1456" height="873" viewBox="308 145 1456 873" className="absolute left-0 top-0 font-['Liberation_Sans']">
      <Grid />
      {/* field vectors sit behind the coil */}
      <FieldArrow x1={704} y1={535} x2={770} y2={535} c="#10f8a8" dbl />
      <FieldArrow x1={690} y1={535} x2={620} y2={535} c="#10f8a8" />
      <FieldArrow x1={690} y1={535} x2={636} y2={535} c="#0a6cff" />
      <FieldArrow x1={700} y1={465} x2={644} y2={461} c="#10dcff" />
      <polygon points="682,479 676,471 682,465 690,471" fill="#0a6cff" />
      <FieldArrow x1={700} y1={465} x2={756} y2={483} c="#10f050" />
      <FieldArrow x1={1210} y1={468} x2={1174} y2={471} c="#10dcff" />
      <FieldArrow x1={1215} y1={466} x2={1285} y2={448} c="#10f8a8" />
      <FieldArrow x1={1210} y1={534} x2={1149} y2={534} c="#10f8a8" />
      <FieldArrow x1={1190} y1={534} x2={1168} y2={534} c="#0a6cff" />
      <FieldArrow x1={1215} y1={534} x2={1297} y2={534} c="#10f8a8" dbl />
      <polygon points="1222,596 1228,596 1236,602 1228,608 1222,608" fill="#10aaff" />

      {/* right half of the strip is behind the coil, left half in front */}
      <rect x="960" y="261" width="788" height="22" fill="#14f452" />
      <polygon points={jag("979,261 1110,261 1062,266 1000,270")} fill="#40f01c" />
      <polygon points={jag("1000,270 1040,265 1200,264 1290,268 1400,274 1560,279 1748,281 1748,283 1100,281 1040,279")} fill="#12eea0" />
      <Coil />
      <CoilBarLeft />

      {/* global axes */}
      <line x1="955.5" y1="535" x2="955.5" y2="426" stroke="#ff0000" strokeWidth="2.2" />
      <polygon points="955.5,410 949.5,428 961.5,428" fill="#ee0000" />
      <line x1="956" y1="534.5" x2="1065" y2="534.5" stroke="#0a8a0a" strokeWidth="2.4" />
      <polygon points="1081,534.5 1063,528 1063,541" fill="#0a640a" />
      <ellipse cx="955.5" cy="535" rx="5" ry="6" fill="#4a70e8" />
      <text x="962" y="384" textAnchor="middle" fontSize="23" fill="#ff2020">X</text>
      <text x="1113" y="535" textAnchor="middle" fontSize="23" fill="#108a10">Y</text>
      <text x="962" y="534" textAnchor="middle" fontSize="23" fill="#4a70e0">Z</text>

      {/* view triad */}
      <circle cx="389.5" cy="919.5" r="6.5" fill="#e81010" />
      <circle cx="389.5" cy="947" r="6.5" fill="#e81010" />
      <circle cx="375" cy="933" r="6.5" fill="#18b018" />
      <circle cx="404" cy="933" r="6.5" fill="#0a6a0a" />
      <circle cx="403.5" cy="919.5" r="3" fill="#888" />
      <rect x="375.5" y="919.5" width="28" height="28" fill="#fff" stroke="#c8d4dc" />
      <circle cx="389.5" cy="933" r="6.5" fill="#3a68d0" />
      <circle cx="387.5" cy="931" r="2" fill="#7a9ae8" />
      <line x1="389.5" y1="908" x2="389.5" y2="890" stroke="#f01010" strokeWidth="2.6" />
      <polygon points="389.5,880 385.5,894 393.5,894" fill="#f01010" />
      <text x="386.5" y="880" textAnchor="middle" fontSize="14" fill="#f02020">X</text>
      <line x1="415" y1="933.5" x2="432" y2="933.5" stroke="#109010" strokeWidth="3" />
      <polygon points="443,933.5 429,929.5 429,937.5" fill="#108010" />
      <text x="448" y="941" textAnchor="middle" fontSize="14" fontWeight="bold" fill="#109020">Y</text>

      {/* ruler */}
      <rect x="725.5" y="977.5" width="310" height="10" fill="#fff" stroke="#000" />
      <rect x="1035" y="977" width="310" height="11" fill="#000" />
      <text x="725" y="1008" textAnchor="middle" fontSize="15" fill="#222">0</text>
      <text x="1035" y="1008" textAnchor="middle" fontSize="15" fill="#222">35</text>
      <text x="1337" y="1008" fontSize="15" fill="#222">70 (mm)</text>
    </svg>
  )
}

const legendColors = ["#ff0000", "#ff7300", "#ffe000", "#aaff00", "#3cff00", "#00ff2a", "#00ffa0", "#00e0ff", "#0070ff", "#0000ff"]
const legendValues = ["60000", "54000", "48000", "42000", "36000", "30000", "24000", "18000", "12000", "6000", "0"]

function Legend() {
  return (
    <div className="absolute left-0 top-0 h-[443px] w-[163px] bg-white pl-[6px] pt-[7px] font-['Liberation_Sans'] text-[#111]">
      <div className="flex h-[430px] w-[151px] flex-col border border-black">
        <div className="flex h-[40px] items-center border-b border-black pl-[6px] text-[20px] font-bold">
          B<span className="ml-[10px]">[uTesla]</span>
        </div>
        <div className="flex h-[26px] items-center border-b border-black pl-[5px] text-[19px]">Max: 59609.254</div>
        <div className="flex h-[336px] border-b border-black">
          <div className="ml-[6px] mt-[17px] flex w-[42px] flex-col">
            {legendColors.map((c) => (
              <div key={c} className="h-[30.4px]" style={{ backgroundColor: c }} />
            ))}
          </div>
          <div className="ml-[9px] flex w-[84px] flex-col items-center text-[19px]">
            {legendValues.map((v) => (
              <div key={v} className="flex h-[30.4px] items-center">{v}</div>
            ))}
          </div>
        </div>
        <div className="flex flex-1 items-center pl-[5px] text-[19px]">
          Min:<span className="ml-[20px]">42.779</span>
        </div>
      </div>
    </div>
  )
}

// ---------- page sections ----------

function AppIcon({ size }: { size: number }) {
  return (
    <svg width={size} height={size} viewBox="0 0 16 16" className="shrink-0">
      <rect width="16" height="16" fill="#111" />
      <g fill="none" stroke="#d89018" strokeWidth="1.2">
        <path d="M6 4a4 4 0 0 0 0 8M10 4a4 4 0 0 1 0 8M4 2a7 7 0 0 0 0 12M12 2a7 7 0 0 1 0 12" />
      </g>
      <circle cx="8" cy="8" r="1.3" fill="#d89018" />
    </svg>
  )
}

function TitleBar() {
  return (
    <div className="flex h-[22px] items-center bg-white">
      <div className="ml-[3px] mr-[6px]"><AppIcon size={14} /></div>
      <span className="mt-px text-[11.94px] text-[#111]">Ansys Electronics Desktop 2023 R2 - helical_coil - Maxwell3DDesign1 - 3D Modeler - SOLVED - [helical_coil - Maxwell3DDesign1 - Modeler]</span>
      <div className="ml-auto flex h-full pb-[2px]">
        <div className="flex w-[46px] items-center justify-center">
          <div className="h-px w-[10px] bg-black" />
        </div>
        <div className="flex w-[46px] items-center justify-center">
          <svg width="10" height="11" viewBox="0 0 10 11">
            <path d="M.5 2.5h7v8h-7zM2.5 2.5v-2h7v8h-2" fill="none" stroke="#000" />
          </svg>
        </div>
        <div className="flex w-[46px] items-center justify-center">
          <svg width="11" height="11" viewBox="0 0 11 11">
            <path d="M.5.5l10 10M10.5.5l-10 10" stroke="#000" />
          </svg>
        </div>
      </div>
    </div>
  )
}

const menus = ["File", "Edit", "View", "Project", "Draw", "Modeler", "Maxwell 3D", "Tools", "Window", "Help"]

function MenuBar() {
  return (
    <div className="flex h-[20px] items-center bg-white">
      <div className="ml-[8px] mr-[8px] flex h-[14px] w-[14px] items-center justify-center border border-[#b8c0c8] bg-[#e8ecf0]">
        <div className="h-[10px] w-[7px] bg-linear-to-b from-[#2a6a5a] to-[#90b8a8]" />
      </div>
      <div className="mt-px flex gap-[13.4px] text-[12px] text-[#111]">
        {menus.map((m) => (
          <span key={m}>{m}</span>
        ))}
      </div>
      <div className="ml-auto flex gap-[2px] pr-px pt-[2px]">
        {["_", "❐", "✕"].map((g) => (
          <div key={g} className="flex h-[17px] w-[17px] items-center justify-center border border-[#e0e0e0] bg-[#f2f2f2] text-[10px] leading-none text-[#555]">{g}</div>
        ))}
      </div>
    </div>
  )
}

function Ribbon() {
  return (
    <div className="flex h-[78px] border-t-2 border-[#d8dae2] bg-[#f1f2f6] pt-[5px] leading-none">
      <div className="flex w-[166px] shrink-0">
        <div className="flex w-[52px] flex-col items-center pl-[3px] pt-[4px]">
          <Floppy />
          <span className="mt-[7px]">Save</span>
        </div>
        <div className="w-[54px]">
          <Item icon={<Scissors />} label="Cut" off />
          <Item icon={<CopyIco />} label="Copy" off />
          <Item icon={<PasteIco />} label="Paste" />
        </div>
        <div>
          <Item icon={<UndoIco />} label="Undo" />
          <Item icon={<UndoIco off />} label="Redo" off />
          <Item icon={<XIco />} label="Delete" off />
        </div>
      </div>
      <Sep />
      <div className="w-[123px] shrink-0 pl-[8px]">
        <div className="flex h-[22px] items-center gap-[3px]">
          <span>Select:</span>
          <Combo value="Object" className="h-[20px] w-[75px]" />
        </div>
        <Item className="pl-[2px]" icon={<SelectName />} label="Select by Name" />
      </div>
      <Sep />
      <div className="grid w-[62px] shrink-0 grid-cols-[16px_16px] content-start gap-x-[10px] pl-[9px]">
        <Item icon={<EyeCheck c="#108a30" />} />
        <Item icon={<EyeList />} />
        <Item icon={<EyeCheck c="#70b088" faded />} />
        <Item icon={<EyeX />} />
        <Item icon={<EyeCheck c="#c8a8d8" faded />} />
      </div>
      <Sep />
      <div className="flex w-[121px] shrink-0">
        <div className="flex w-[52px] flex-col items-center pt-[4px]">
          <Magnifier />
          <span className="mt-[6px]">Zoom</span>
          <span className="mt-[6px] h-0 w-0 border-x-[3px] border-t-[4px] border-x-transparent border-t-[#777]" />
        </div>
        <div>
          <Item icon={<Fourway />} label="Pan" />
          <Item icon={<Fourway rot />} label="Rotate" arrow />
          <Item icon={<OrientCube />} label="Orient" arrow />
        </div>
      </div>
      <Sep />
      <div className="w-[95px] shrink-0 pl-[9px]">
        <Item icon={<FitIco />} label="Fit All" />
        <Item icon={<FitIco off />} label="Fit Selected" off />
      </div>
      <Sep />
      <div className="grid w-[86px] shrink-0 grid-cols-[16px_16px_16px] content-start gap-x-[10px] pl-[10px]">
        <Item icon={<BoxG />} />
        <Item icon={<Cone />} />
        <Item icon={<Helix />} />
        <Item icon={<Cyl />} />
        <Item icon={<Sphere />} />
        <Item icon={<Spiral />} />
        <Item icon={<Prism />} />
        <Item icon={<Torus />} />
        <Item icon={<Bond />} />
      </div>
      <Sep dark />
      <div className="grid w-[59px] shrink-0 grid-cols-[16px_16px] content-start gap-x-[10px] pl-[8px]">
        <Item icon={<RectG />} />
        <Item icon={<OvalG />} />
        <Item icon={<CircleG />} />
        <Item icon={<FnIco />} />
        <Item icon={<Hexa />} />
      </div>
      <Sep dark />
      <div className="grid w-[60px] shrink-0 grid-cols-[16px_16px] content-start gap-x-[10px] pl-[9px]">
        <Item icon={<LineIco />} />
        <Item icon={<ArcIco />} />
        <Item icon={<ZigIco />} />
        <Item icon={<FnWave />} />
        <Item icon={<CurveIco />} />
      </div>
      <Sep dark />
      <div className="grid w-[60px] shrink-0 grid-cols-[16px_16px] content-start gap-x-[11px] pl-[8px]">
        <Item icon={<RedBox />} />
        <Item icon={<RedBox s />} />
        <Item icon={<Dot />} />
        <div />
        <Item icon={<PlaneIco />} />
      </div>
      <Sep />
      <div className="w-[68px] shrink-0 pl-[9px]">
        <Item icon={<MoveIco kind="m" />} label="Move" off />
        <Item icon={<MoveIco kind="r" />} label="Rotate" off />
        <Item icon={<MoveIco kind="f" />} label="Mirror" off />
      </div>
      <Sep dark />
      <div className="w-[95px] shrink-0 pl-[8px]">
        <Item icon={<MoveIco kind="lm" />} label="Along Line" off />
        <Item icon={<MoveIco kind="lr" />} label="Around Axis" off />
        <Item icon={<MoveIco kind="lf" />} label="Thru Mirror" off />
      </div>
      <Sep dark />
      <div className="flex w-[140px] shrink-0 pl-[8px]">
        <div className="w-[70px]">
          <Item icon={<BoolIco kind="u" />} label="Unite" off />
          <Item icon={<BoolIco kind="s" />} label="Subtract" off />
          <Item icon={<BoolIco kind="i" />} label="Intersect" off />
        </div>
        <div>
          <Item icon={<BoolIco kind="sp" />} label="Split" off />
          <Item icon={<BoolIco kind="im" />} label="Imprint" off />
        </div>
      </div>
      <Sep dark />
      <div className="w-[33px] shrink-0 pl-[8px]">
        <Item icon={<SheetIco kind={0} />} />
        <Item icon={<SheetIco kind={1} />} />
        <Item icon={<SheetIco kind={2} />} />
      </div>
      <Sep dark />
      <div className="w-[76px] shrink-0 pl-[9px]">
        <Item icon={<FilletIco />} label="Fillet" off />
        <Item icon={<FilletIco c />} label="Chamfer" off />
      </div>
      <Sep dark />
      <div className="w-[80px] shrink-0 pl-[8px]">
        <Item icon={<SurfIco />} label="Surface" arrow />
        <Item icon={<SheetSm />} label="Sheet" arrow />
        <Item icon={<EdgeIco />} label="Edge" arrow />
      </div>
      <Sep dark />
      <div className="w-[100px] shrink-0 pl-[8px]">
        <Item icon={<CsIco kind={0} />} label="Relative CS" arrow />
        <Item icon={<CsIco kind={1} off />} label="Face CS" off />
        <Item icon={<CsIco kind={1} off />} label="Object CS" off arrow />
      </div>
      <Sep />
      <div className="w-[89px] shrink-0 pl-[6px]">
        <Item className="pl-[3px]" icon={<MeasureIco />} label="Measure" arrow />
        <Item className="w-[53px] bg-[#cccccc] pl-[3px]" icon={<RulerIco />} label="Ruler" />
        <div className="flex h-[22px] items-center pl-[3px]">Units</div>
      </div>
      <Sep />
      <div className="w-[76px] shrink-0 pl-[6px]">
        <Item className="w-[48px] bg-[#cccccc] pl-[3px]" icon={<GridIco />} label="Grid" />
        <Combo value="XY" className="h-[20px] w-[64px]" />
        <Combo value="3D" className="mt-[2px] h-[20px] w-[64px]" />
      </div>
      <Sep />
      <div className="grid w-[62px] shrink-0 grid-cols-[26px_26px] content-start pl-[6px]">
        {[<GridIco key="a" dotted />, <SnapBox key="b" kind={0} />, <SnapBox key="c" kind={1} />, <SnapBox key="d" kind={2} />, <SnapBox key="e" kind={3} />].map((ic, i) => (
          <div key={i} className="flex h-[22px] items-center justify-center bg-[#cccccc]">{ic}</div>
        ))}
        <div className="flex h-[22px] items-center justify-center"><ArcSnap /></div>
      </div>
      <Sep />
      <div className="w-[91px] shrink-0 pl-[7px]">
        <Combo value="Model" className="h-[20px] w-[80px]" />
        <Combo value="vacuum" className="mt-px h-[20px] w-[80px]" />
        <Item className="mt-px pl-[2px]" icon={<MaterialIco />} label="Material" off />
      </div>
      <Sep />
    </div>
  )
}

const tabs: [string, string][] = [
  ["Desktop", "w-[88px] pl-[16px]"],
  ["View", "w-[40px]"],
  ["Draw", ""],
  ["Model", "w-[77px] pl-[15px]"],
  ["Simulation", "w-[84px]"],
  ["Results", "w-[66px]"],
  ["Automation", "w-[91px]"],
  ["Ansys Minerva", "w-[104px]"],
  ["Learning and Support", "w-[150px]"],
]

function TabsRow() {
  return (
    <div className="flex h-[20px] items-center border-t border-[#c6c9d4] bg-[#f0f0f0] leading-none text-[#2c2c3c]">
      {tabs.map(([t, c]) =>
        t === "Draw" ? (
          <div key={t} className="-mt-px flex h-[20px] w-[53px] items-center justify-center border-x border-b border-[#c6c9d4] bg-[#f1f2f6] text-[#24508c]">{t}</div>
        ) : (
          <div key={t} className={c}>{t}</div>
        ),
      )}
      <div className="ml-auto flex items-center gap-[7px] pr-[2px]">
        <div className="flex h-[15px] w-[15px] items-center justify-center rounded-full bg-[#1a68b8] text-[12px] font-bold leading-none text-white">?</div>
        <svg width="18" height="18" viewBox="0 0 18 18">
          <rect width="18" height="18" fill="#ffc80a" />
          <path d="M3 18L8 1h2l5 17h-3L9 8l-3 10z" fill="#111" />
        </svg>
      </div>
    </div>
  )
}

function LeftColumn() {
  return (
    <div className="flex w-[150px] shrink-0 flex-col bg-white pt-[3px]">
      <PaneHeader title="Project Manager" />
      <div className="h-[400px] overflow-hidden pt-px">
        {projectRows.map((r) => (
          <TreeRow key={r.label} row={r} base={4} />
        ))}
      </div>
      <HScroll spacer="w-[1px]" thumb="w-[65px]" />
      <div className="h-[3px]" />
      <div className="h-[4px] bg-[repeating-conic-gradient(#5f666e_0_25%,#aab0b6_0_50%)] bg-[length:2px_2px]" />
      <div className="h-[1px]" />
      <PaneHeader title="Properties" small />
      <div className="flex flex-1 flex-col bg-[#f0f0f0] px-[4px] pb-[8px]">
        <div className="flex-1 border-b-2 border-r-2 border-[#9a9a9a] bg-[#f0f0f0]" />
      </div>
    </div>
  )
}

function MidColumn() {
  return (
    <div className="flex w-[146px] shrink-0 flex-col bg-white pt-[5px]">
      <div className="min-h-0 flex-1 overflow-hidden">
        {modelRows.map((r) => (
          <TreeRow key={r.label} row={r} base={6} wide />
        ))}
      </div>
      <HScroll spacer="w-[2px]" thumb="w-[89px]" />
      <div className="h-[4px]" />
    </div>
  )
}

function RightColumn() {
  return (
    <div className="flex w-[150px] shrink-0 flex-col bg-[#f0f0f0] pt-[3px]">
      <PaneHeader title="Component Librar..." />
      <div className="flex flex-1 flex-col px-[5px] pb-[5px] pt-[6px]">
        <div className="min-h-0 flex-1 overflow-hidden bg-white pt-[2px]">
          <div className="-ml-[5px] w-[139px] overflow-hidden pt-px">
            {compRows.map((r) => (
              <TreeRow key={r.label} row={r} base={12} compact wide />
            ))}
          </div>
        </div>
        <HScroll spacer="w-[4px]" thumb="w-[58px]" />
        <div className="ml-[4px] mt-[5px] flex h-[18px] w-[70px] items-center justify-center rounded-b-sm border-b-2 border-r-2 border-[#888] bg-[#f6f6f6] text-[11px] text-[#1a1a30]">Components</div>
      </div>
    </div>
  )
}

function StatusBar() {
  return (
    <div className="flex h-[22px] items-center bg-[#cdd4dc] pl-[4px] text-[#1a1a2a]">
      <span className="mt-[2px]">Nothing is selected</span>
      <div className="ml-auto flex items-center gap-[4px] pr-[2px] text-[11px]">
        <div className="flex h-[19px] w-[120px] items-center whitespace-nowrap border border-[#b8c0c8] bg-[#d6dce2] pl-[5px]">
          <svg width="13" height="13" viewBox="0 0 13 13" className="mr-[6px]">
            <path d="M6.5 0L13 13H0z" fill="#f0d020" stroke="#a08810" />
            <path d="M6.5 4v5M6.5 10v2" stroke="#222" strokeWidth="1.4" />
          </svg>
          Show 3 Messages
        </div>
        <div className="flex h-[19px] w-[103px] items-center whitespace-nowrap border border-[#b8c0c8] bg-[#d6dce2] pl-[5px]">
          <div className="mr-[8px] h-[4px] w-[10px] bg-linear-to-r from-[#18d018] from-50% to-[#888] to-50%" />
          Show Progress
        </div>
      </div>
    </div>
  )
}

function Taskbar() {
  return (
    <div className="flex h-[40px] items-center bg-linear-to-r from-[#20393f] via-[#1c2f42] to-[#1a2c46] text-white">
      <div className="flex h-full w-[49px] items-center justify-center">
        <svg width="16" height="16" viewBox="0 0 16 16">
          <path d="M0 2.3L6.6 1.4v6.2H0zM7.4 1.3L16 0v7.6H7.4zM0 8.4h6.6v6.2L0 13.7zM7.4 8.4H16V16l-8.6-1.2z" fill="#fff" />
        </svg>
      </div>
      <div className="flex h-full w-[287px] items-center bg-[#f2f2f2] pl-[11px] pt-px font-['Noto_Sans',sans-serif] text-[13.8px] text-[#333]">
        <svg width="18" height="18" viewBox="0 0 18 18" className="mr-[11px]">
          <circle cx="11" cy="7" r="5.5" fill="none" stroke="#222" strokeWidth="1.2" />
          <path d="M7 11l-6 6" stroke="#222" strokeWidth="1.2" />
        </svg>
        Type here to search
      </div>
      <div className="flex h-full w-[48px] items-center justify-center">
        <svg width="18" height="18" viewBox="0 0 18 18">
          <path d="M1 1h13M1 17h13M3 4.5h9v9H3z" stroke="#fff" fill="none" />
          <rect x="14" y="7" width="3" height="3" fill="#fff" />
        </svg>
      </div>
      <div className="ml-[3px] flex h-full w-[48px] items-center justify-center">
        <svg width="24" height="24" viewBox="0 0 24 24">
          <defs>
            <linearGradient id="edge" x1="0" y1="0" x2="1" y2="1">
              <stop offset="0" stopColor="#38c8a0" />
              <stop offset="0.6" stopColor="#1a78d0" />
              <stop offset="1" stopColor="#0a3a90" />
            </linearGradient>
          </defs>
          <circle cx="12" cy="12" r="12" fill="url(#edge)" />
          <path d="M5 13c0-5 9-7 12-2 1 2-2 4-4 3 1-3-4-4-5-1s3 7 8 6c-5 4-11 0-11-6z" fill="#0a58b8" />
        </svg>
      </div>
      <div className="flex h-full w-[48px] flex-col items-center">
        <div className="flex flex-1 items-center justify-center">
          <svg width="22" height="21" viewBox="0 0 22 21">
            <path d="M0 1h8l2 3h12v17H0z" fill="#f4c438" />
            <path d="M0 6h22v15H0z" fill="#fcd860" />
            <path d="M7 14l4-3 4 3v7H7z" fill="#2a88d8" />
            <rect x="9" y="17" width="4" height="4" fill="#f4c438" />
          </svg>
        </div>
        <div className="h-[2px] w-[40px] bg-[#76b9ed]" />
      </div>
      <div className="flex h-full w-[48px] items-center justify-center">
        <svg width="23" height="24" viewBox="0 0 23 24">
          <rect y="5" width="23" height="19" rx="2" fill="#f4f4f4" />
          <path d="M6 8V3a5.500 3 0 0 1 11 0v5" fill="none" stroke="#2aa0e0" strokeWidth="2" />
          <rect x="6" y="9" width="5" height="5" fill="#f04a20" />
          <rect x="12" y="9" width="5" height="5" fill="#70c020" />
          <rect x="6" y="15" width="5" height="5" fill="#20a0e8" />
          <rect x="12" y="15" width="5" height="5" fill="#f8b818" />
        </svg>
      </div>
      <div className="ml-[3px] flex h-full w-[48px] items-center justify-center border-b-2 border-[#76b9ed] bg-[#4b5e68]">
        <div className="relative flex h-[30px] w-[24px] flex-col items-center justify-between bg-black pt-[2px]">
          <svg width="20" height="16" viewBox="0 0 20 16">
            <g fill="none" stroke="#d89018" strokeWidth="1.2">
              <path d="M7 4a5 5 0 0 0 0 8M13 4a5 5 0 0 1 0 8M5 2a8 8 0 0 0 0 12M15 2a8 8 0 0 1 0 12M3 0a11 11 0 0 0 0 16M17 0a11 11 0 0 1 0 16" />
            </g>
            <circle cx="10" cy="8" r="1.5" fill="#d89018" />
          </svg>
          <span className="font-['Liberation_Sans'] text-[9px] font-bold leading-[11px]">EDT</span>
        </div>
      </div>
      <div className="ml-auto flex h-full items-center">
        <svg width="24" height="19" viewBox="0 0 24 19" className="mr-[23px]">
          <path d="M1 1h19v17H3a2 2 0 0 1-2-2zM20 4h3v12a2 2 0 0 1-3 2" fill="none" stroke="#fff" strokeWidth="1.3" />
          <path d="M4 5h13M4 8h6v6H4zM12 9h5M12 12h5" stroke="#fff" fill="none" />
        </svg>
        <ChevronUp size={16} strokeWidth={1.5} className="ml-px mr-[8px]" />
        <svg width="17" height="17" viewBox="0 0 17 17" className="mr-[8px]">
          <path d="M3 1h13v10H3zM1 3h5v4H1zM9.500 11v4M5 15.500h9" fill="#1c2d44" stroke="#fff" />
        </svg>
        <svg width="17" height="17" viewBox="0 0 17 17" className="mr-[6px]">
          <path d="M1 6h3l4-4v13l-4-4H1zM10 5c2 2 2 5 0 7M12 3c3 3 3 8 0 11" fill="none" stroke="#fff" />
        </svg>
        <div className="flex w-[59px] flex-col items-center font-['Noto_Sans',sans-serif] text-[11.2px] leading-[18px]">
          <span>23:46</span>
          <span>2024/10/23</span>
        </div>
        <svg width="17" height="17" viewBox="0 0 17 17" className="ml-[20px] mr-[24px]">
          <path d="M.5.5h16v12h-5l-3 3-3-3h-5z" fill="none" stroke="#fff" />
        </svg>
      </div>
    </div>
  )
}

export default function App() {
  return (
    <div className="flex h-[1080px] w-[1920px] flex-col overflow-hidden bg-white font-['Roboto',sans-serif] text-[11.5px] leading-none">
      <TitleBar />
      <MenuBar />
      <Ribbon />
      <TabsRow />
      <div className="flex min-h-0 flex-1">
        <LeftColumn />
        <Splitter />
        <MidColumn />
        <div className="w-[4px] shrink-0 bg-[#f4f4f4]" />
        <div className="relative mt-[3px] min-w-0 flex-1 overflow-hidden border-l-2 border-t-2 border-[#8a8a8a] bg-white">
          <Viewport />
          <Legend />
          <div className="absolute right-[10px] top-[9px] flex flex-col items-end font-['Liberation_Sans'] font-bold text-[#4a4a4a]">
            <span className="text-[21px] leading-[21px]">Ansys</span>
            <span className="w-[78px] border-b border-[#333] pb-[2px] text-right text-[12.5px] leading-[13px]">2023 R2</span>
            <span className="mt-[2px] text-[11px] leading-[11px]">TEACHING</span>
          </div>
        </div>
        <Splitter />
        <RightColumn />
      </div>
      <StatusBar />
      <Taskbar />
    </div>
  )
}
